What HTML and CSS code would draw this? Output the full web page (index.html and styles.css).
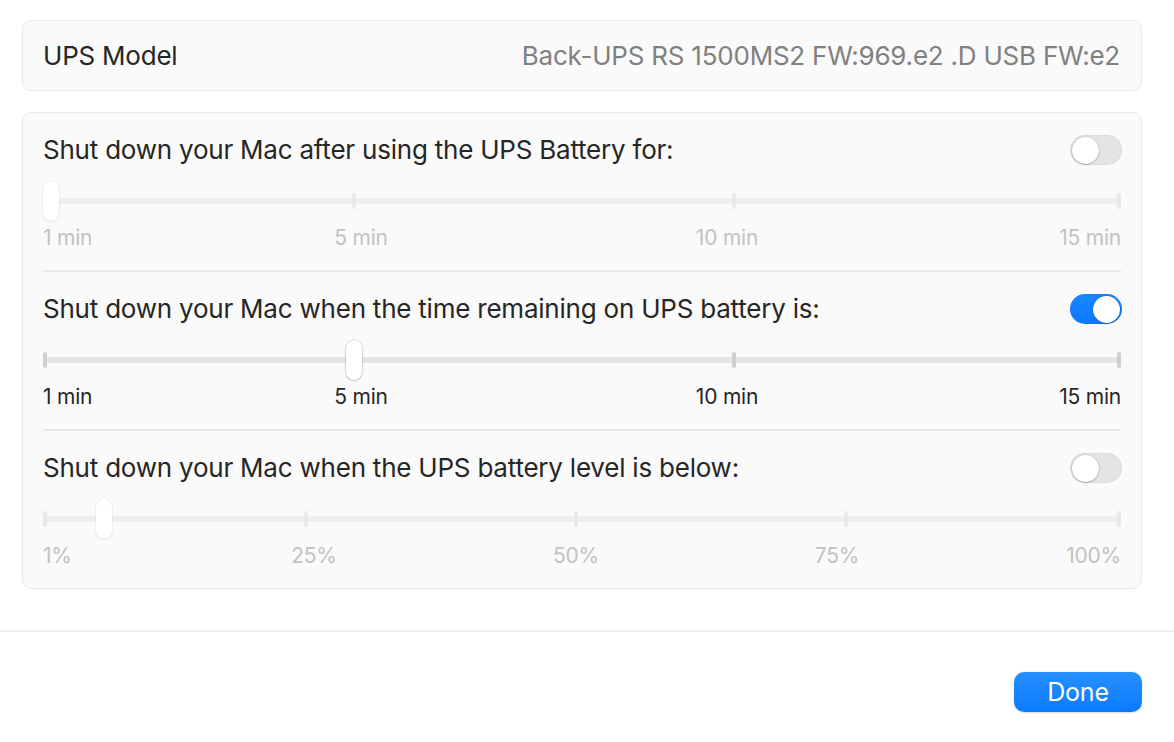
FILE: index.html
```html
<!DOCTYPE html>
<html>
<head>
<meta charset="utf-8">
<link rel="stylesheet" href="styles.css">
</head>
<body>
<div class="content">
  <div class="card model">
    <span class="model-label">UPS Model</span>
    <span class="model-value">Back-UPS RS 1500MS2 FW:969.e2 .D USB FW:e2</span>
  </div>

  <div class="card options">
    <div class="row disabled">
      <div class="row-head">
        <span class="title">Shut down your Mac after using the UPS Battery for:</span>
        <span class="toggle"><span class="knob"></span></span>
      </div>
      <div class="slider">
        <div class="track"></div>
        <span class="tick" style="left:0px"></span>
        <span class="tick" style="left:309px"></span>
        <span class="tick" style="left:689px"></span>
        <span class="tick" style="left:1074px"></span>
        <span class="thumb" style="left:0px"></span>
      </div>
      <div class="scale">
        <span class="lbl start">1 min</span>
        <span class="lbl mid" style="left:318px">5 min</span>
        <span class="lbl mid" style="left:684px">10 min</span>
        <span class="lbl end">15 min</span>
      </div>
    </div>

    <div class="row">
      <div class="row-head">
        <span class="title">Shut down your Mac when the time remaining on UPS battery is:</span>
        <span class="toggle on"><span class="knob"></span></span>
      </div>
      <div class="slider">
        <div class="track"></div>
        <span class="tick" style="left:0px"></span>
        <span class="tick" style="left:309px"></span>
        <span class="tick" style="left:689px"></span>
        <span class="tick" style="left:1074px"></span>
        <span class="thumb" style="left:303px"></span>
      </div>
      <div class="scale">
        <span class="lbl start">1 min</span>
        <span class="lbl mid" style="left:318px">5 min</span>
        <span class="lbl mid" style="left:684px">10 min</span>
        <span class="lbl end">15 min</span>
      </div>
    </div>

    <div class="row disabled last">
      <div class="row-head">
        <span class="title">Shut down your Mac when the UPS battery level is below:</span>
        <span class="toggle"><span class="knob"></span></span>
      </div>
      <div class="slider">
        <div class="track"></div>
        <span class="tick" style="left:0px"></span>
        <span class="tick" style="left:261px"></span>
        <span class="tick" style="left:531px"></span>
        <span class="tick" style="left:801px"></span>
        <span class="tick" style="left:1074px"></span>
        <span class="thumb" style="left:53px"></span>
      </div>
      <div class="scale">
        <span class="lbl start">1%</span>
        <span class="lbl mid" style="left:271px">25%</span>
        <span class="lbl mid" style="left:533px">50%</span>
        <span class="lbl mid" style="left:794px">75%</span>
        <span class="lbl end">100%</span>
      </div>
    </div>
  </div>
</div>

<div class="footer">
  <button class="done">Done</button>
</div>
</body>
</html>
```

FILE: styles.css
```css
* { box-sizing: border-box; }

html, body {
  margin: 0;
  padding: 0;
  background: #ffffff;
}

body {
  width: 1174px;
  height: 742px;
  overflow: hidden;
  font-family: Inter, "Noto Sans", "Liberation Sans", sans-serif;
  color: #262626;
  letter-spacing: -0.22px;
}

.content {
  padding: 20px 32px 0 22px;
  display: flex;
  flex-direction: column;
  gap: 21px;
}

.card {
  background: #fafafa;
  border: 1px solid #e9e9e9;
  border-radius: 9px;
}

.model {
  display: flex;
  justify-content: space-between;
  align-items: center;
  padding: 19px 21px 18px 20px;
  font-size: 26px;
  line-height: 32px;
}

.model-value {
  color: #808080;
}

.options {
  padding: 0 20px;
}

.row {
  padding: 21px 0 19px;
  border-bottom: 2px solid #e8e8e8;
}

.row.last {
  border-bottom: none;
  padding-bottom: 19px;
}

.row-head {
  height: 32px;
  display: flex;
  align-items: center;
  justify-content: space-between;
}

.title {
  font-size: 26px;
  line-height: 32px;
}

.toggle {
  width: 52px;
  height: 30px;
  border-radius: 15px;
  background: #e4e4e4;
  box-shadow: inset 0 0 0 1px rgba(0,0,0,0.04);
  display: flex;
  align-items: center;
  padding: 0 2px;
  margin-right: -1px;
}

.toggle .knob {
  width: 27px;
  height: 27px;
  border-radius: 50%;
  background: #ffffff;
  box-shadow: 0 0.5px 1.5px rgba(0,0,0,0.35), 0 0 0 0.5px rgba(0,0,0,0.08);
}

.toggle.on {
  background: linear-gradient(#1a86ff, #0a7aff);
  justify-content: flex-end;
}

.slider {
  position: relative;
  height: 40px;
  margin-top: 15px;
}

.track {
  position: absolute;
  left: 0;
  right: 0;
  top: 17px;
  height: 6px;
  border-radius: 3px;
  background: #e6e6e6;
}

.tick {
  position: absolute;
  top: 12px;
  width: 4px;
  height: 16px;
  border-radius: 2px;
  background: #cfcfcf;
}

.thumb {
  position: absolute;
  top: 0;
  width: 16px;
  height: 40px;
  border-radius: 8px;
  background: #ffffff;
  box-shadow: 0 0.5px 2px rgba(0,0,0,0.3), 0 0 0 0.5px rgba(0,0,0,0.1);
}

.scale {
  position: relative;
  height: 26px;
  margin-top: 4px;
  font-size: 21px;
  line-height: 26px;
}

.lbl {
  position: absolute;
  top: 0;
  white-space: nowrap;
}

.lbl.start { left: 0; }
.lbl.end { right: 0; }
.lbl.mid { transform: translateX(-50%); }

.row.disabled .track { background: #efefef; }
.row.disabled .tick { background: #e8e8e8; }
.row.disabled .thumb {
  box-shadow: 0 0.5px 1.5px rgba(0,0,0,0.12), 0 0 0 0.5px rgba(0,0,0,0.06);
}
.row.disabled .lbl { color: #c2c2c2; }

.footer {
  margin-top: 41px;
  border-top: 2px solid #ececec;
  display: flex;
  justify-content: flex-end;
  padding: 40px 32px 0 0;
}

.done {
  width: 128px;
  height: 40px;
  border: none;
  border-radius: 10px;
  background: linear-gradient(#2891ff, #0a7aff);
  color: #ffffff;
  font-family: Inter, "Noto Sans", "Liberation Sans", sans-serif;
  font-size: 25px;
  letter-spacing: -0.2px;
  padding: 0;
  box-shadow: 0 0.5px 2px rgba(0,0,0,0.15);
}
```
